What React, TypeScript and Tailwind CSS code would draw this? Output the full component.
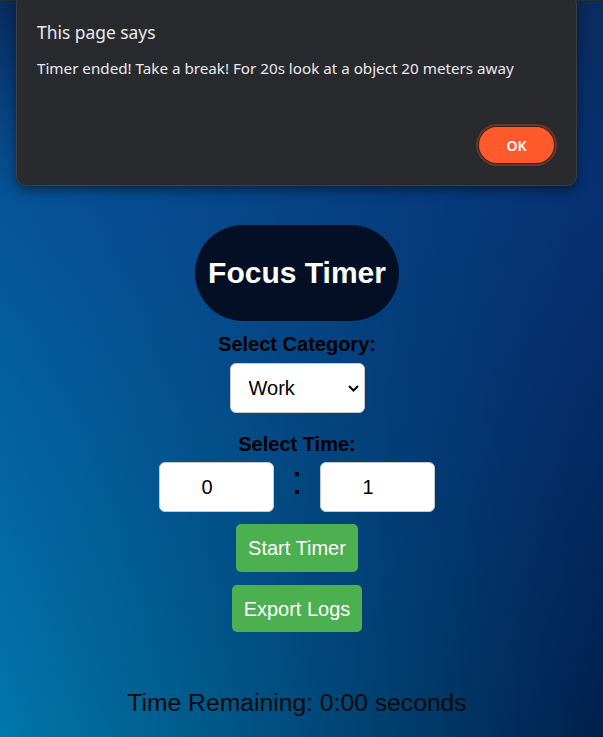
import { useState } from 'react';

function Chevron() {
  return (
    <svg width="11" height="7" viewBox="0 0 11 7" className="pointer-events-none absolute right-[6px] top-[22px]">
      <path d="M1 1l4.5 4.5L10 1" fill="none" stroke="#000" strokeWidth="2" />
    </svg>
  );
}

function AlertDialog() {
  return (
    <div className="absolute left-[16px] top-[-6px] h-[192px] w-[561px] rounded-[10px] border border-[#3d3e42] bg-[#292a2d] shadow-[0_4px_12px_rgba(0,0,0,0.45)] font-['Noto_Sans','Open_Sans',sans-serif]">
      <div className="pl-[20px] pt-[26px]">
        <div className="text-[17.4px] leading-[23px] text-[#e8eaed]">This page says</div>
        <div className="mt-[14px] text-[15.2px] leading-[20px] text-[#e8eaed]">
          Timer ended! Take a break! For 20s look at a object 20 meters away
        </div>
      </div>
      <button className="absolute bottom-[22px] right-[22px] h-[36px] w-[75px] rounded-full bg-[#ff5a2b] text-[14px] font-semibold text-white shadow-[0_0_0_1px_#2e2522,0_0_0_3px_#6e3628]">
        OK
      </button>
    </div>
  );
}

export default function App() {
  const [category, setCategory] = useState('Work');
  const [minutes, setMinutes] = useState('0');
  const [seconds, setSeconds] = useState('1');

  return (
    <div className="relative h-[737px] w-full overflow-hidden bg-[linear-gradient(to_bottom,#0a2b5e_0%,rgba(10,60,140,0.6)_27%,rgba(10,60,140,0)_100%),linear-gradient(to_right,#0077aa,#00204d)] font-['Liberation_Sans',Arial,sans-serif]">
      <div className="absolute inset-x-0 top-0 h-px bg-[#2b2d33]" />

      <div className="flex flex-col items-center pr-[9px] pt-[225px]">
        <h1 className="rounded-full bg-[#030f25] px-[13px] py-[31px] text-[30px] font-bold leading-[34px] text-white">
          Focus Timer
        </h1>

        <label className="mt-[12px] text-[20px] font-bold leading-[23px] text-black">Select Category:</label>
        <div className="relative mt-[7px] h-[50px] w-[135px]">
          <select
            value={category}
            onChange={(e) => setCategory(e.target.value)}
            className="h-full w-full appearance-none rounded-[6px] border border-[#c8c8c8] bg-white pl-[18px] text-[20px] text-black outline-none"
          >
            <option>Work</option>
            <option>Study</option>
            <option>Reading</option>
          </select>
          <Chevron />
        </div>

        <label className="mt-[20px] text-[20px] font-bold leading-[23px] text-black">Select Time:</label>
        <div className="mt-[6px] flex h-[50px] items-start">
          <input
            value={minutes}
            onChange={(e) => setMinutes(e.target.value)}
            className="h-[50px] w-[115px] rounded-[6px] border border-[#c8c8c8] bg-white pr-[19px] text-center text-[20px] text-black outline-none"
          />
          <span className="block h-[50px] w-[46px] text-center text-[40px] leading-[36px] text-black">:</span>
          <input
            value={seconds}
            onChange={(e) => setSeconds(e.target.value)}
            className="h-[50px] w-[115px] rounded-[6px] border border-[#c8c8c8] bg-white pr-[19px] text-center text-[20px] text-black outline-none"
          />
        </div>

        <button className="mt-[12px] h-[48px] rounded-[5px] bg-[#4caf50] px-[12px] text-[20px] text-white">
          Start Timer
        </button>
        <button className="mt-[13px] h-[47px] rounded-[5px] bg-[#4caf50] px-[12px] text-[20px] text-white">
          Export Logs
        </button>

        <p className="mt-[57px] text-[24.7px] leading-[28px] text-[#0a0a0a]">Time Remaining: 0:00 seconds</p>
      </div>

      <AlertDialog />
    </div>
  );
}
